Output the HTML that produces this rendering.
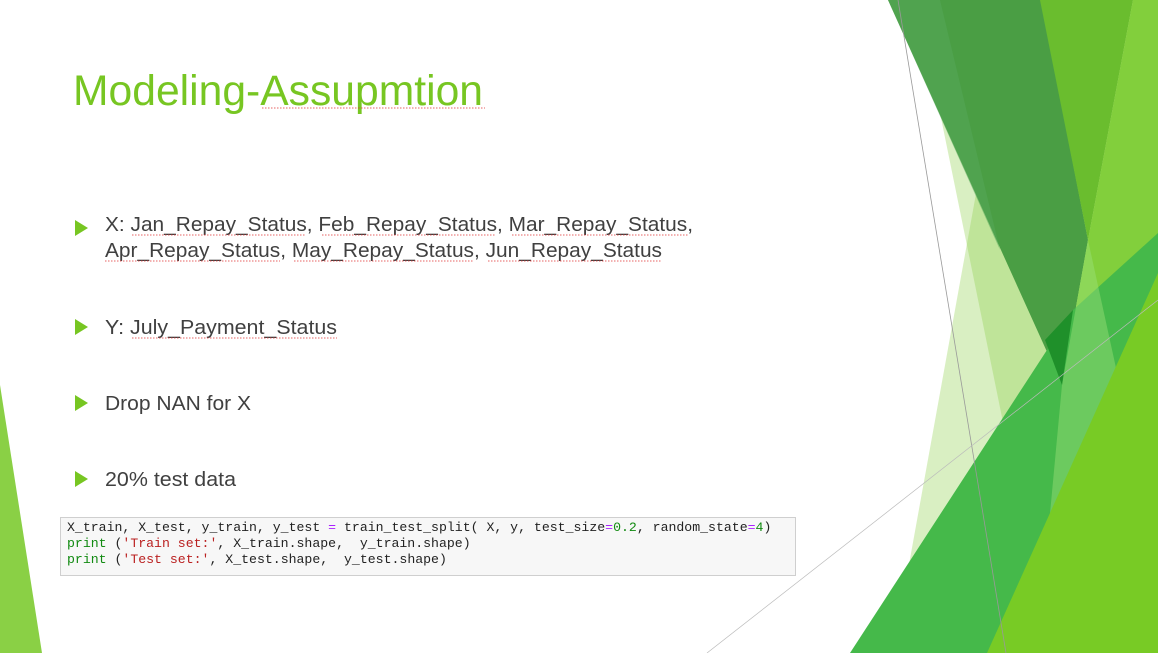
<!DOCTYPE html>
<html><head><meta charset="utf-8"><style>
html,body{margin:0;padding:0;background:#fff;}
body{width:1158px;height:653px;position:relative;overflow:hidden;font-family:"Liberation Sans",sans-serif;}
svg{position:absolute;left:0;top:0;}
.code{position:absolute;left:60px;top:517px;width:736px;height:59px;background:#f7f7f7;border:1px solid #cfcfcf;box-sizing:border-box;}
.code pre{margin:0;position:absolute;left:6px;top:2px;font-family:"Liberation Mono",monospace;font-size:13.2px;line-height:16px;color:#222;}
.k{color:#118a11;}.s{color:#ba2121;}.o{color:#aa22ff;}.n{color:#118a11;}
</style></head><body>
<svg width="1158" height="653" viewBox="0 0 1158 653">
 <polygon points="0,385 42,653 0,653" fill="#8ad045"/>
 <polygon points="1011,0 1158,0 1158,653 893,653" fill="rgb(140,205,70)" fill-opacity="0.33"/>
 <polygon points="917,0 1158,0 1158,653 1050,653" fill="rgb(140,205,70)" fill-opacity="0.33"/>
 <polygon points="888,0 1041,0 1088,240 1062,385" fill="#4a9e44"/>
 <polygon points="888,0 940,0 1000,250" fill="#55a85a" opacity="0.5"/>
 <polygon points="1040,0 1133,0 1088,240" fill="#6abd2e"/>
 <polygon points="1133,0 1158,0 1158,653 1037,653 1062,385 1088,240" fill="#82cf3c"/>
 <polygon points="850,653 1073,310 1158,233 1158,653" fill="#45b94a"/>
 <polygon points="1062,385 1088,240 1158,560 1158,653 1037,653" fill="#9be07a" opacity="0.45"/>
 <polygon points="1045,340 1073,310 1062,385" fill="#1f902a"/>
 <polygon points="987,653 1158,273 1158,653" fill="#78cb25"/>
 <line x1="898" y1="0" x2="1006" y2="653" stroke="#999" stroke-width="0.8"/>
 <line x1="707" y1="653" x2="1158" y2="300" stroke="#bbb" stroke-width="0.7"/>
 <text x="73" y="105" font-size="43" fill="#77c622" textLength="410" lengthAdjust="spacingAndGlyphs" font-family="Liberation Sans">Modeling-Assupmtion</text>
 <g fill="#77c622">
  <polygon points="75,220 88,228 75,236"/>
  <polygon points="75,319 88,327 75,335"/>
  <polygon points="75,395 88,403 75,411"/>
  <polygon points="75,471 88,479 75,487"/>
 </g>
 <g font-size="20" fill="#404040" font-family="Liberation Sans">
  <text x="105" y="231" textLength="588" lengthAdjust="spacingAndGlyphs">X: Jan_Repay_Status, Feb_Repay_Status, Mar_Repay_Status,</text>
  <text x="105" y="257" textLength="557" lengthAdjust="spacingAndGlyphs">Apr_Repay_Status, May_Repay_Status, Jun_Repay_Status</text>
  <text x="105" y="334" textLength="232" lengthAdjust="spacingAndGlyphs">Y: July_Payment_Status</text>
  <text x="105" y="410" textLength="146" lengthAdjust="spacingAndGlyphs">Drop NAN for X</text>
  <text x="105" y="486" textLength="131" lengthAdjust="spacingAndGlyphs">20% test data</text>
 </g>
 <g stroke="#e03030" stroke-width="0.8" stroke-dasharray="1.5 1.5">
  <line x1="132" y1="235" x2="306" y2="235"/><line x1="322" y1="235" x2="496" y2="235"/><line x1="512" y1="235" x2="688" y2="235"/>
  <line x1="105" y1="261" x2="280" y2="261"/><line x1="294" y1="261" x2="474" y2="261"/><line x1="488" y1="261" x2="662" y2="261"/>
  <line x1="132" y1="338" x2="337" y2="338"/>
  <line x1="262" y1="108" x2="485" y2="108"/>
 </g>
</svg>
<div class="code"><pre>X_train, X_test, y_train, y_test <span class="o">=</span> train_test_split( X, y, test_size<span class="o">=</span><span class="n">0.2</span>, random_state<span class="o">=</span><span class="n">4</span>)
<span class="k">print</span> (<span class="s">'Train set:'</span>, X_train.shape,  y_train.shape)
<span class="k">print</span> (<span class="s">'Test set:'</span>, X_test.shape,  y_test.shape)</pre></div>
</body></html>
